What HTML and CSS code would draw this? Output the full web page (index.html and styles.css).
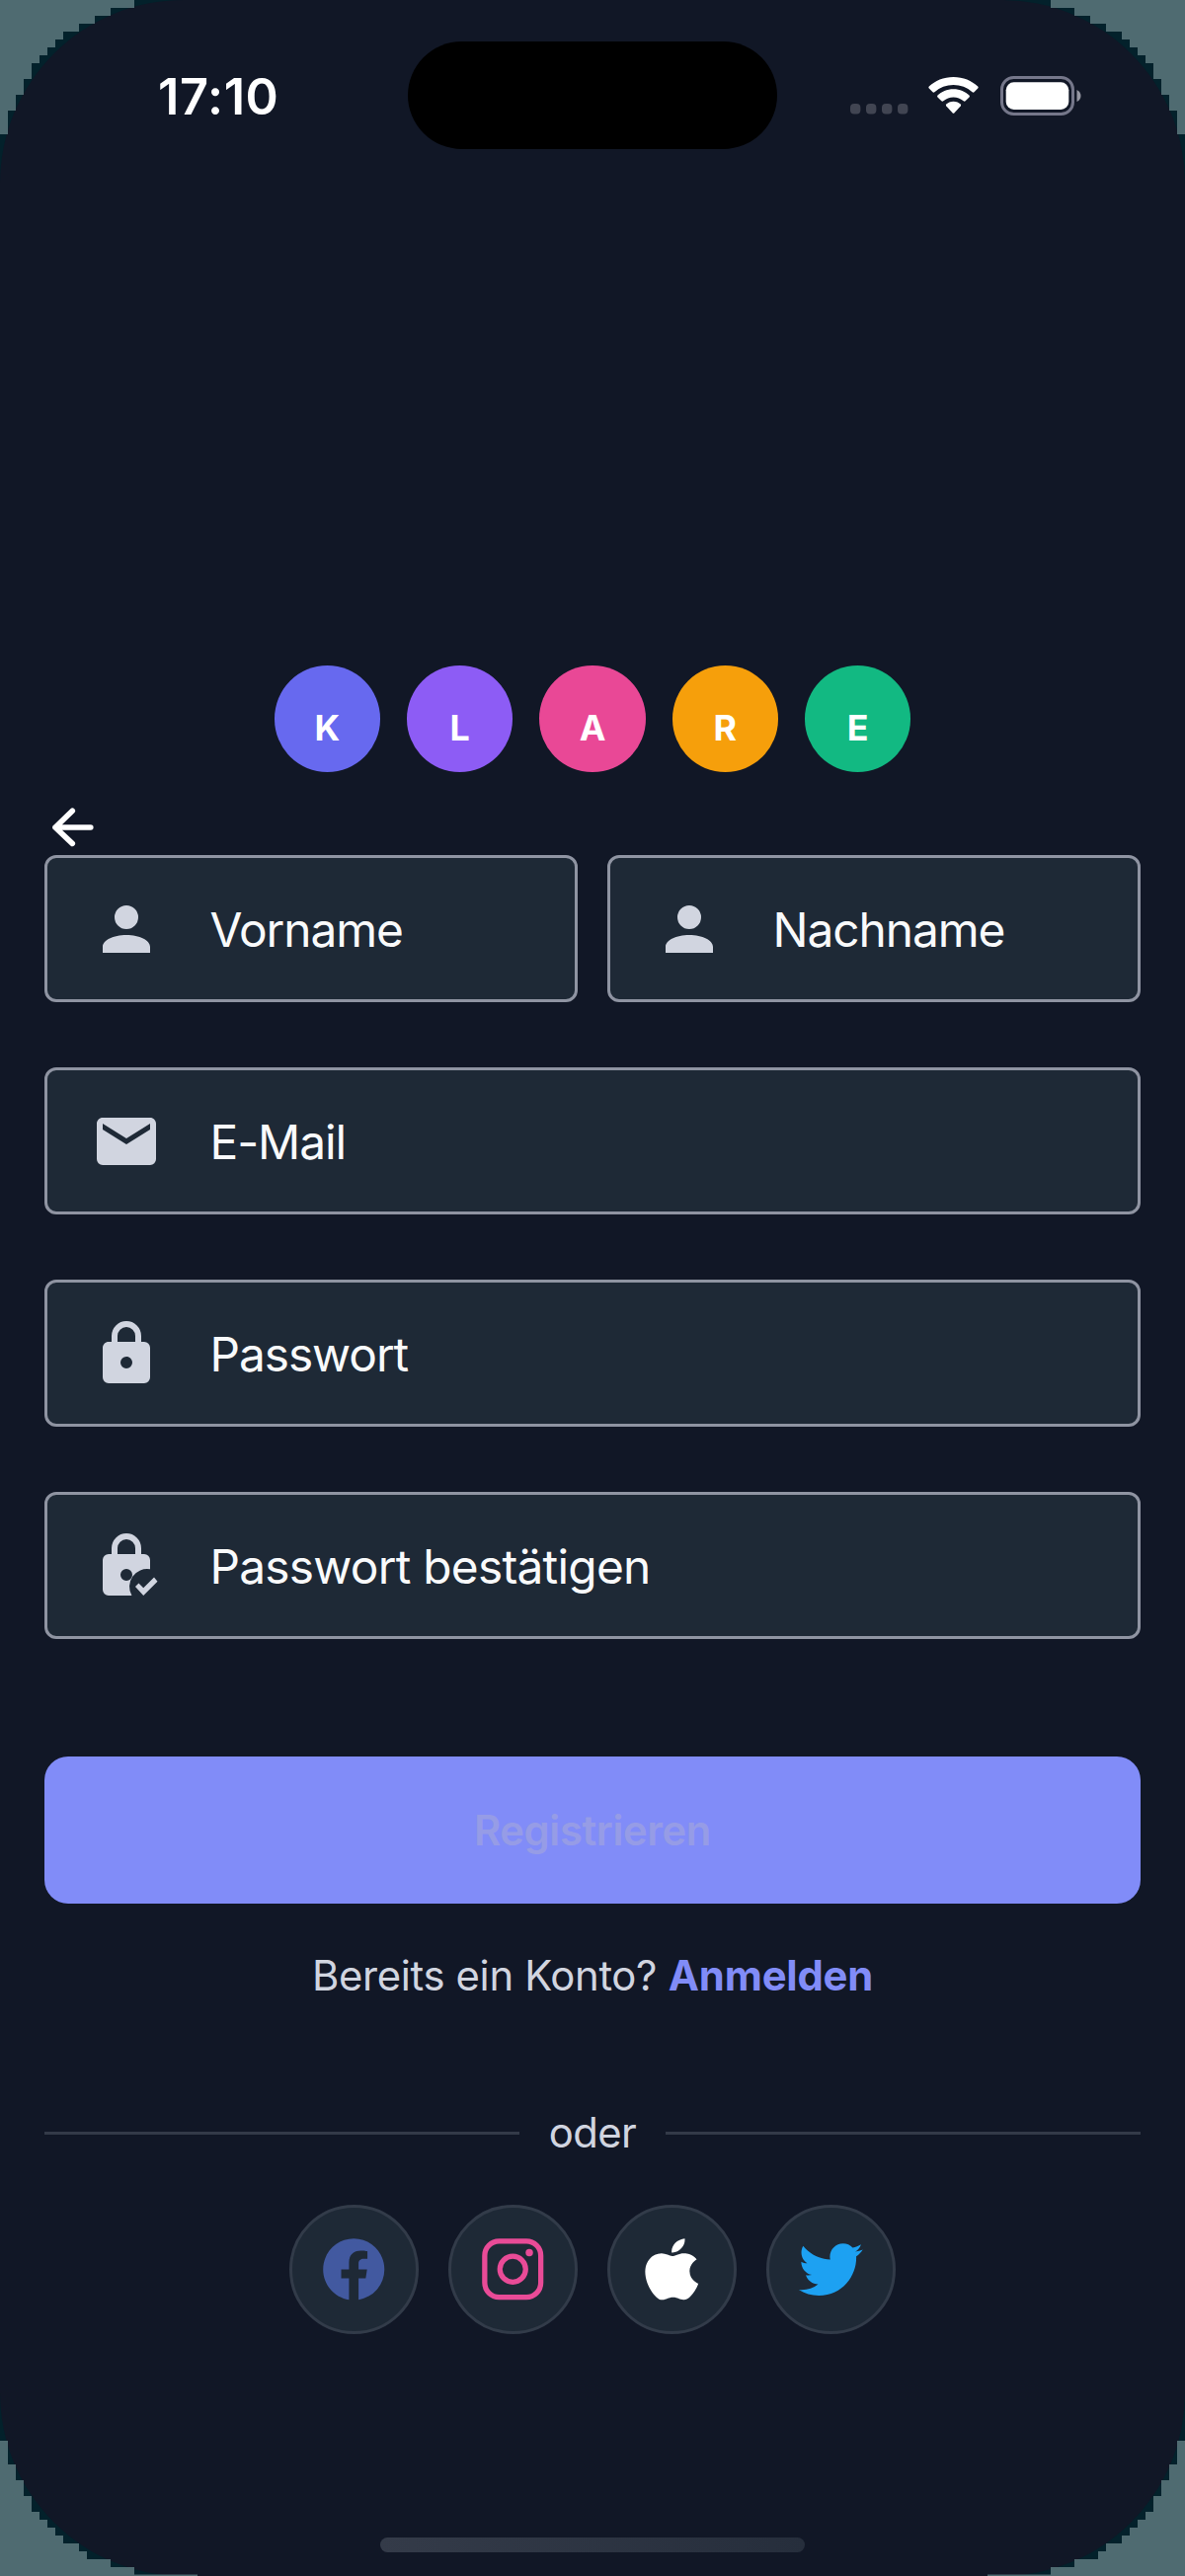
FILE: index.html
```html
<!DOCTYPE html>
<html lang="de">
<head>
<meta charset="utf-8">
<title>Registrieren</title>
<link rel="stylesheet" href="styles.css">
</head>
<body>
<div class="device">
  <div class="screen">
    <header class="status">
      <span class="time">17:10</span>
      <span class="island"></span>
      <span class="indicators">
        <svg class="signal" viewBox="0 0 59 39"><rect x="0" y="28" width="10.4" height="10.4" rx="4"/><rect x="16" y="28" width="10.4" height="10.4" rx="4"/><rect x="32" y="28" width="10.4" height="10.4" rx="4"/><rect x="48" y="28" width="10.4" height="10.4" rx="4"/></svg>
        <svg class="wifi" viewBox="0 0 51 39"><path d="M25.500 1C35.300 1 44.200 4.800 50.200 10.600Q51.100 11.600 50.200 12.600L46.500 16.300Q45.600 17.200 44.600 16.300A28.500 28.500 0 0 0 6.400 16.300Q5.400 17.200 4.500 16.300L.8 12.600Q-.1 11.600.8 10.600C6.800 4.800 15.700 1 25.500 1Z"/><path d="M25.500 13.200C32 13.200 37.600 15.700 41.500 19.500Q42.400 20.500 41.500 21.500L37.600 25.300Q36.700 26.200 35.700 25.300A15.500 15.500 0 0 0 15.300 25.300Q14.300 26.200 13.400 25.300L9.500 21.500Q8.600 20.500 9.500 19.500C13.400 15.700 19 13.200 25.500 13.200Z"/><path d="M25.500 25.800C28.600 25.800 31 27 32.700 28.500Q33.600 29.500 32.700 30.500L26.500 37.200Q25.500 38.200 24.500 37.200L18.300 30.500Q17.400 29.500 18.300 28.500C20 27 22.400 25.800 25.500 25.800Z"/></svg>
        <svg class="battery" viewBox="0 0 82 40"><rect class="shell" x="1.500" y="1.500" width="72" height="37" rx="12"/><rect class="charge" x="5.700" y="6.300" width="63.600" height="27.600" rx="8"/><path class="nub" d="M77.500 14Q81.500 16 81.500 20T77.500 26Z"/></svg>
      </span>
    </header>

    <main class="content">
      <div class="logo">
        <span class="dot dot-k">K</span>
        <span class="dot dot-l">L</span>
        <span class="dot dot-a">A</span>
        <span class="dot dot-r">R</span>
        <span class="dot dot-e">E</span>
      </div>

      <svg class="back" viewBox="0 0 48 48"><path d="M23.300 7.200L6 24L23.300 40.400M6 24H41.800"/></svg>

      <form class="form">
        <div class="row">
          <label class="field">
            <svg class="icon" viewBox="0 0 24 24"><path d="M12 4A4 4 0 1 1 12 12A4 4 0 1 1 12 4M12 14C16.420 14 20 15.790 20 18V20H4V18C4 15.790 7.580 14 12 14Z"/></svg>
            <span class="label">Vorname</span>
          </label>
          <label class="field">
            <svg class="icon" viewBox="0 0 24 24"><path d="M12 4A4 4 0 1 1 12 12A4 4 0 1 1 12 4M12 14C16.420 14 20 15.790 20 18V20H4V18C4 15.790 7.580 14 12 14Z"/></svg>
            <span class="label">Nachname</span>
          </label>
        </div>
        <label class="field">
          <svg class="icon" viewBox="0 0 24 24"><path d="M20 8L12 13L4 8V6L12 11L20 6M20 4H4C2.890 4 2 4.890 2 6V18A2 2 0 0 0 4 20H20A2 2 0 0 0 22 18V6C22 4.890 21.100 4 20 4Z"/></svg>
          <span class="label">E-Mail</span>
        </label>
        <label class="field">
          <svg class="icon" viewBox="0 0 24 24"><path d="M12 17A2 2 0 0 0 14 15C14 13.890 13.100 13 12 13A2 2 0 0 0 10 15A2 2 0 0 0 12 17M18 8A2 2 0 0 1 20 10V20A2 2 0 0 1 18 22H6A2 2 0 0 1 4 20V10C4 8.890 4.900 8 6 8H7V6A5 5 0 0 1 17 6V8H18M12 3A3 3 0 0 0 9 6V8H15V6A3 3 0 0 0 12 3Z"/></svg>
          <span class="label">Passwort</span>
        </label>
        <label class="field">
          <svg class="icon" viewBox="0 0 24 24"><path fill-rule="evenodd" d="M6 8H7V6A5 5 0 0 1 17 6V8H18A2 2 0 0 1 20 10V13.090A6 6 0 0 0 13.810 22H6A2 2 0 0 1 4 20V10A2 2 0 0 1 6 8ZM12 3A3 3 0 0 0 9 6V8H15V6A3 3 0 0 0 12 3ZM12 13A2 2 0 1 0 12 17A2 2 0 1 0 12 13ZM21.340 15.840L22.500 17.250L17.750 22L15 19L16.160 17.840L17.750 19.430Z"/></svg>
          <span class="label label-long">Passwort bestätigen</span>
        </label>
        <button class="submit" type="button" disabled>Registrieren</button>
      </form>

      <p class="login"><span class="ask">Bereits ein Konto?</span> <a class="link">Anmelden</a></p>

      <div class="divider"><span class="rule"></span><span class="or">oder</span><span class="rule"></span></div>

      <div class="socials">
        <span class="social"><svg class="brand facebook" viewBox="0 0 24 24"><path d="M12 2.040C6.500 2.040 2 6.530 2 12.060C2 17.060 5.660 21.210 10.440 21.960V14.960H7.900V12.060H10.440V9.850C10.440 7.340 11.930 5.960 14.220 5.960C15.310 5.960 16.450 6.150 16.450 6.150V8.620H15.190C13.950 8.620 13.560 9.390 13.560 10.220V12.060H16.340L15.890 14.960H13.560V21.960A10 10 0 0 0 22 12.060C22 6.530 17.500 2.040 12 2.040Z"/></svg></span>
        <span class="social"><svg class="brand instagram" viewBox="0 0 24 24"><rect x="2.850" y="2.850" width="18.300" height="18.300" rx="4.700"/><circle cx="12" cy="12" r="4.200"/><circle class="lens" cx="17.400" cy="6.600" r="1.200"/></svg></span>
        <span class="social"><svg class="brand apple" viewBox="0 0 24 24"><path transform="translate(-.8 0) scale(1.070 1)" d="M18.710 19.500C17.880 20.740 17 21.950 15.660 21.970C14.320 22 13.890 21.180 12.370 21.180C10.840 21.180 10.370 21.950 9.100 22C7.790 22.050 6.800 20.680 5.960 19.470C4.250 17 2.940 12.450 4.700 9.390C5.570 7.870 7.130 6.910 8.820 6.880C10.100 6.860 11.320 7.750 12.110 7.750C12.890 7.750 14.370 6.680 15.920 6.840C16.570 6.870 18.390 7.100 19.560 8.820C19.470 8.880 17.390 10.100 17.410 12.630C17.440 15.650 20.060 16.660 20.090 16.670C20.060 16.740 19.670 18.110 18.710 19.500M13 3.500C13.730 2.670 14.940 2.040 15.940 2C16.070 3.170 15.600 4.350 14.900 5.190C14.210 6.040 13.070 6.700 11.950 6.610C11.800 5.460 12.360 4.260 13 3.500Z"/></svg></span>
        <span class="social"><svg class="brand twitter" viewBox="0 .4 24 24"><path d="M22.460 6C21.690 6.350 20.860 6.580 20 6.690C20.880 6.160 21.560 5.320 21.880 4.310C21.050 4.810 20.130 5.160 19.160 5.360C18.370 4.500 17.260 4 16 4C13.650 4 11.730 5.920 11.730 8.290C11.730 8.630 11.770 8.960 11.840 9.270C8.280 9.090 5.110 7.380 3 4.790C2.630 5.420 2.420 6.160 2.420 6.940C2.420 8.430 3.170 9.750 4.330 10.500C3.620 10.500 2.960 10.300 2.380 10V10.030C2.380 12.110 3.860 13.850 5.820 14.240C5.460 14.340 5.080 14.390 4.690 14.390C4.420 14.390 4.150 14.360 3.890 14.310C4.430 16 6 17.260 7.890 17.290C6.430 18.450 4.580 19.130 2.560 19.130C2.220 19.130 1.880 19.110 1.540 19.070C3.440 20.290 5.700 21 8.120 21C16 21 20.330 14.460 20.330 8.790C20.330 8.600 20.330 8.420 20.320 8.230C21.160 7.630 21.880 6.870 22.460 6Z"/></svg></span>
      </div>
    </main>

    <div class="home"></div>
  </div>

  <svg class="corner top-left" viewBox="0 0 200 140"><path d="M0 0H136V8H112V16H96V24H80V32H64V40H56V48H48V56H40V64H32V80H24V96H16V112H8V136H0Z"/></svg>
  <svg class="corner top-right" viewBox="0 0 200 140"><path d="M0 0H136V8H112V16H96V24H80V32H64V40H56V48H48V56H40V64H32V80H24V96H16V112H8V136H0Z"/></svg>
  <svg class="corner bottom-left" viewBox="0 0 200 140"><path d="M0 0H200V1.500H136V9H112V17H88V25H80V33H64V41H56V49H48V57H40V65H32V81H24V97H16V113H8V137H0Z"/></svg>
  <svg class="corner bottom-right" viewBox="0 0 200 140"><path d="M0 0H200V1.500H136V9H112V17H88V25H80V33H64V41H56V49H48V57H40V65H32V81H24V97H16V113H8V137H0Z"/></svg>
</div>
</body>
</html>
```

FILE: styles.css
```css
* { box-sizing: border-box; }

body {
  margin: 0;
  background: #03212b;
  font-family: Inter, "Liberation Sans", sans-serif;
}

svg { display: block; }

.device {
  position: relative;
  width: 1200px;
  height: 2609px;
  overflow: hidden;
}

.screen {
  display: flex;
  flex-direction: column;
  height: 2609px;
  background: #111726;
  border-radius: 186px;
}

/* Status bar */
.status {
  display: grid;
  grid-template-columns: 413px 374px 413px;
  align-items: center;
  height: 109px;
  margin-top: 42px;
}

.time {
  padding: 2px 0 0 160px;
  color: #fff;
  font-size: 50.500px;
  font-weight: 600;
  line-height: 60px;
  letter-spacing: 0.600px;
}

.island {
  height: 109px;
  background: #000;
  border-radius: 55px;
}

.indicators {
  display: flex;
  align-items: center;
  padding-left: 74px;
}

.signal { width: 59px; height: 39px; margin-right: 20px; fill: #414552; }
.wifi { width: 51px; height: 39px; margin-right: 22px; fill: #fff; }
.battery { width: 82px; height: 40px; }
.shell { fill: none; stroke: #75778a; stroke-width: 3; }
.charge { fill: #fff; }
.nub { fill: #9698a3; }

/* Page content */
.content {
  display: flex;
  flex-direction: column;
  margin-top: 523px;
  padding: 0 45px;
}

.logo {
  display: flex;
  justify-content: center;
  gap: 26.870px;
}

.dot {
  width: 107.500px;
  height: 108px;
  padding-top: 18px;
  border-radius: 50%;
  color: #fff;
  font-size: 35.800px;
  font-weight: 700;
  line-height: 90px;
  text-align: center;
}

.dot-k { background: #6769ef; }
.dot-l { background: #8d5cf5; }
.dot-a { background: #e94896; }
.dot-r { background: #f69f0b; }
.dot-e { background: #12b982; }

.back {
  width: 48px;
  height: 48px;
  margin: 32px 0 4px 5px;
  fill: none;
  stroke: #fff;
  stroke-width: 5.600;
  stroke-linecap: round;
  stroke-linejoin: round;
}

.form {
  display: flex;
  flex-direction: column;
  gap: 66px;
}

.row {
  display: grid;
  grid-template-columns: 1fr 1fr;
  gap: 30px;
}

.field {
  display: flex;
  align-items: center;
  gap: 48.500px;
  height: 149px;
  padding-left: 44px;
  background: #1e2936;
  border: 3px solid #8f94a2;
  border-radius: 12px;
}

.icon { width: 72px; height: 72px; fill: #d1d5e0; }

.label {
  padding-top: 3px;
  color: #f9fafb;
  font-size: 47.800px;
  line-height: 60px;
  letter-spacing: -1.050px;
  white-space: nowrap;
}

.label-long { letter-spacing: -0.750px; }

.submit {
  height: 149px;
  margin-top: 53px;
  padding: 0;
  border: 0;
  border-radius: 24px;
  background: #818cf8;
  color: #969ce6;
  font: 600 41.800px/50px Inter, "Liberation Sans", sans-serif;
  letter-spacing: -0.400px;
}

.login {
  margin: 48px 0 0;
  font-size: 41.800px;
  line-height: 50px;
  text-align: center;
  white-space: nowrap;
}

.ask { color: #d1d5e0; letter-spacing: -0.330px; }
.link { color: #818cf8; font-weight: 700; letter-spacing: -0.200px; }

.divider {
  display: flex;
  align-items: center;
  height: 50px;
  margin-top: 109px;
}

.rule { flex: 1; height: 3px; background: #333a48; }

.or {
  width: 148px;
  color: #d1d5e0;
  font-size: 41.800px;
  line-height: 50px;
  letter-spacing: -0.600px;
  text-align: center;
}

.socials {
  display: flex;
  justify-content: center;
  gap: 29.850px;
  margin-top: 48px;
}

.social {
  display: flex;
  align-items: center;
  justify-content: center;
  width: 131.300px;
  height: 131.300px;
  background: #1e2936;
  border: 3px solid #323b49;
  border-radius: 50%;
}

.brand { width: 74.500px; height: 74.500px; }
.facebook { fill: #4259a0; }
.instagram { fill: none; stroke: #e94b97; stroke-width: 1.700; }
.instagram .lens { fill: #e94b97; stroke: none; }
.apple { fill: #fff; }
.twitter { fill: #1da1f2; }

.home {
  width: 430px;
  height: 15px;
  margin: auto auto 24px;
  border-radius: 8px;
  background: linear-gradient(90deg, #343b49, #262e3c);
}

/* Stepped bezel corners over the screen */
.corner {
  position: absolute;
  width: 200px;
  height: 140px;
  fill: #4f6b71;
}

.top-left { top: 0; left: 0; }
.top-right { top: 0; right: 0; transform: scaleX(-1); }
.bottom-left { bottom: 0; left: 0; transform: scaleY(-1); }
.bottom-right { bottom: 0; right: 0; transform: scale(-1); }
```
